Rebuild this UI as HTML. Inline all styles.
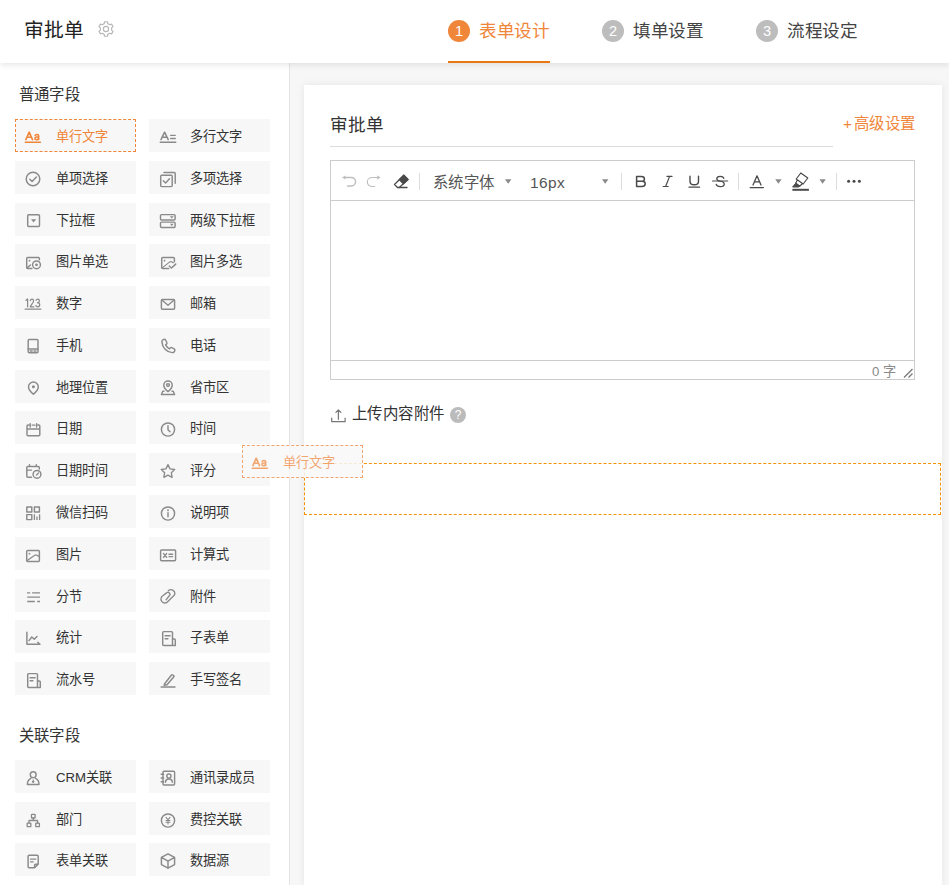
<!DOCTYPE html>
<html lang="zh-CN">
<head>
<meta charset="utf-8">
<title>审批单</title>
<style>
*{box-sizing:border-box;margin:0;padding:0}
html,body{width:949px;height:885px;overflow:hidden}
body{font-family:"Liberation Sans",sans-serif;background:#f7f7f7;color:#333;position:relative;font-size:13px}
svg{display:block}
/* header */
.hd{position:absolute;left:0;top:0;width:949px;height:63px;background:#fff;box-shadow:0 2px 6px rgba(0,0,0,.10);z-index:10}
.hd .tt{position:absolute;left:24px;top:16px;font-size:19.8px;letter-spacing:-.2px;line-height:29px;color:#222}
.hd .gear{position:absolute;left:97.500px;top:21px;width:16px;height:16px}
.tab{position:absolute;top:0;height:62px}
.tab .num{position:absolute;left:0;top:20px;width:22px;height:22px;border-radius:50%;background:#bdbdbd;color:#fff;font-size:14.600px;line-height:23px;text-align:center}
.tab .lb{position:absolute;left:31px;top:17px;font-size:17.6px;letter-spacing:-.4px;line-height:29px;color:#444;white-space:nowrap}
.tab.on .num{background:#f0863a}
.tab.on .lb{color:#f0863a}
.tab.on:after{content:"";position:absolute;left:0;top:61px;width:102px;height:2px;background:#e8780f}
/* sidebar */
.sb{position:absolute;left:0;top:62px;width:290px;height:823px;background:#fff;border-right:1px solid #e4e4e4}
.sec{position:absolute;left:18.500px;font-size:15.4px;letter-spacing:.4px;line-height:22px;color:#333}
.it{position:absolute;width:121px;height:33px;background:#f7f7f7;font-size:13.2px;line-height:33px;color:#333;white-space:nowrap}
.it span{position:absolute;left:41px;top:1px}
.it svg{position:absolute;left:9px;top:8.500px;width:18px;height:18px;color:#8a8a8a}
.it.on{background:#f7f7f7;border:1px dashed #f0863a;color:#f0863a}
.it.on span{left:40px;top:0}
.it.on svg{left:8px;top:7.500px;color:#f0863a}
.c1{left:15px}.c2{left:149px}
.it.c2 svg{left:10px}
/* main */
.card{position:absolute;left:304px;top:85px;width:638px;height:800px;background:#fff;box-shadow:0 0 8px rgba(0,0,0,.08)}
.ft{position:absolute;left:330px;top:112px;font-size:17.6px;line-height:27px;color:#333}
.fl{position:absolute;left:330px;top:146px;width:503px;height:1px;background:#dcdcdc}
.adv{position:absolute;left:843px;top:113px;font-size:15.4px;letter-spacing:.4px;line-height:22px;color:#f0863a;white-space:nowrap}
.ed{position:absolute;left:330px;top:160px;width:585px;height:220px;border:1px solid #ccc;background:#fff}
.ed .tb{position:absolute;left:0;top:0;width:583px;height:40px;border-bottom:1px solid #ccc}
.ed .st{position:absolute;left:0;top:199px;width:583px;height:19px;border-top:1px solid #ccc}
.tx{position:absolute;font-size:15.400px;letter-spacing:.4px;line-height:22px;color:#555;white-space:nowrap}
.cnt{position:absolute;left:860px;top:363px;width:36px;text-align:right;font-size:13.200px;line-height:17px;color:#8a8a8a;white-space:nowrap}
.up{position:absolute;left:352px;top:403px;font-size:15.400px;letter-spacing:.4px;line-height:22px;color:#333;white-space:nowrap}
.q{position:absolute;left:450px;top:407px;width:16px;height:16px;border-radius:50%;background:#bbb;color:#fff;font-size:12px;line-height:16px;text-align:center}
.dz{position:absolute;left:304px;top:463px;width:637px;height:52px;border:1px dashed #f29200}
.gh{position:absolute;left:242px;top:445px;width:121px;height:33px;background:rgba(248,248,248,.86);border:1px dashed rgba(240,134,58,.72);color:rgba(240,134,58,.72);font-size:13.2px;line-height:31px;z-index:20;white-space:nowrap}
.gh span{position:absolute;left:40px;top:1px}
.gh svg{position:absolute;left:8px;top:7.500px;width:18px;height:18px}
</style>
</head>
<body>
<svg width="0" height="0" style="position:absolute" aria-hidden="true">
<defs>
<g id="i1" fill="none" stroke="currentColor" stroke-width="1.45" stroke-linecap="round" stroke-linejoin="round"><path d="M1.900 11.600 L5.200 4.200 L8.500 11.600 M3.100 9.200 H7.300" stroke-width="1.600"/><path d="M11.100 7.400 Q11.800 6.600 12.900 6.600 Q14.700 6.600 14.700 8.300 V11.600 M14.700 9 H12.900 Q10.900 9 10.900 10.400 Q10.900 11.700 12.400 11.700 Q14 11.700 14.700 10.500" stroke-width="1.500"/><path d="M1.200 14.200 H16.400" stroke-width="1.400"/></g>
<g id="i2" fill="none" stroke="currentColor" stroke-width="1.45" stroke-linecap="round" stroke-linejoin="round"><path d="M2 11.600 L5.600 4.200 L9.200 11.600 M3.300 9.200 H7.900" stroke-width="1.500"/><path d="M11.600 7.300 H16.300 M11.600 10.500 H16.300" stroke-width="1.300"/><path d="M1.200 14.200 H16.800" stroke-width="1.400"/></g>
<g id="i3" fill="none" stroke="currentColor" stroke-width="1.45" stroke-linecap="round" stroke-linejoin="round"><circle cx="9" cy="9" r="6.800"/><path d="M5.800 9.300 L8.100 11.500 L12.400 7"/></g>
<g id="i4" fill="none" stroke="currentColor" stroke-width="1.45" stroke-linecap="round" stroke-linejoin="round"><rect x="1.700" y="5.300" width="11.500" height="11.300" rx="1"/><path d="M4.300 10.800 L6.600 13 L10.500 8.700"/><path d="M5 2.400 H15.200 Q16.200 2.400 16.200 3.400 V13.300"/></g>
<g id="i5" fill="none" stroke="currentColor" stroke-width="1.45" stroke-linecap="round" stroke-linejoin="round"><rect x="3.700" y="2.700" width="11.800" height="11.800" rx="1"/><path d="M7 7.200 H12.200 L9.600 10.400 Z" fill="currentColor" stroke="none"/></g>
<g id="i6" fill="none" stroke="currentColor" stroke-width="1.45" stroke-linecap="round" stroke-linejoin="round"><rect x="1.500" y="2.600" width="14.600" height="5.300" rx="1"/><rect x="1.500" y="10.100" width="14.600" height="5.300" rx="1"/><path d="M10.900 4.200 h3.800 l-1.900 2.200z M10.900 11.700 h3.800 l-1.900 2.200z" fill="currentColor" stroke="none"/></g>
<g id="i7" fill="none" stroke="currentColor" stroke-width="1.45" stroke-linecap="round" stroke-linejoin="round"><path d="M7.900 15.400 H3.700 Q2.700 15.400 2.700 14.400 V5.400 Q2.700 4.400 3.700 4.400 H14.400 Q15.400 4.400 15.400 5.400 V6.700"/><path d="M3.200 14.900 L6.500 12"/><circle cx="5.500" cy="7.700" r=".9" fill="currentColor" stroke="none"/><circle cx="12.500" cy="11.800" r="3.900"/><circle cx="12.500" cy="11.800" r="1.400" fill="currentColor" stroke="none"/></g>
<g id="i8" fill="none" stroke="currentColor" stroke-width="1.45" stroke-linecap="round" stroke-linejoin="round"><path d="M9.800 15.400 H3.700 Q2.700 15.400 2.700 14.400 V5.400 Q2.700 4.400 3.700 4.400 H14.400 Q15.400 4.400 15.400 5.400 V8.800"/><path d="M3.200 14.900 L10.800 8.900 Q11.600 8.300 12.500 8.800 L14.300 9.800" stroke-width="1.200"/><circle cx="5.500" cy="7.700" r=".9" fill="currentColor" stroke="none"/><path d="M10.300 13 L12.500 15 L16.700 11.100"/></g>
<g id="i9" fill="none" stroke="currentColor" stroke-width="1.45" stroke-linecap="round" stroke-linejoin="round"><path d="M2 5.300 L3.600 4 V11.800 M6.300 5.600 Q6.500 4 8 4 Q9.600 4 9.600 5.700 Q9.600 7 8.200 8.600 L6.200 11.800 H9.900 M12 5.200 Q12.500 4 13.800 4 Q15.400 4 15.400 5.800 Q15.400 7.600 13.500 7.700 Q15.700 7.800 15.700 9.700 Q15.700 11.800 13.800 11.800 Q12.300 11.800 11.800 10.600" stroke-width="1.250"/><path d="M1.200 14.200 H16.800" stroke-width="1.300"/></g>
<g id="i10" fill="none" stroke="currentColor" stroke-width="1.45" stroke-linecap="round" stroke-linejoin="round"><rect x="2.400" y="4.400" width="13.200" height="9.800" rx="1"/><path d="M2.900 5 L9 10.300 L15.100 5"/></g>
<g id="i11" fill="none" stroke="currentColor" stroke-width="1.45" stroke-linecap="round" stroke-linejoin="round"><rect x="4.200" y="2.500" width="9.800" height="13.200" rx="1"/><path d="M4.200 12 H14 M6.200 14 H8.200 M10 14 H12"/></g>
<g id="i12" fill="none" stroke="currentColor" stroke-width="1.45" stroke-linecap="round" stroke-linejoin="round"><path d="M5.600 2.300 C4.300 2.300 2.800 3.300 2.900 4.900 C3.300 10.600 7.600 15.300 13.200 15.600 C14.700 15.700 15.900 14.400 15.900 13.100 C15.900 12.600 15.700 12.200 15.200 11.900 L12.900 10.600 C12.400 10.300 11.800 10.400 11.400 10.800 L10.500 11.800 C8.800 10.900 7.500 9.600 6.600 7.900 L7.600 7 C8 6.600 8.100 6 7.800 5.500 L6.600 3 C6.400 2.500 6 2.300 5.600 2.300 Z"/></g>
<g id="i13" fill="none" stroke="currentColor" stroke-width="1.45" stroke-linecap="round" stroke-linejoin="round"><path d="M9.400 15.200 C9.400 15.200 4.500 11 4.500 7.900 A4.900 4.900 0 0 1 14.300 7.900 C14.300 11 9.400 15.200 9.400 15.200 Z"/><circle cx="9.400" cy="7.800" r="1.500" fill="currentColor" stroke="none"/></g>
<g id="i14" fill="none" stroke="currentColor" stroke-width="1.45" stroke-linecap="round" stroke-linejoin="round"><path d="M9 12.600 C9 12.600 4.800 9.200 4.800 6.200 A4.200 4.200 0 0 1 13.200 6.200 C13.200 9.200 9 12.600 9 12.600 Z"/><circle cx="9" cy="6.100" r="1.400"/><path d="M5 12.300 H3.800 L2.400 15.500 H15.600 L14.200 12.300 H13"/></g>
<g id="i15" fill="none" stroke="currentColor" stroke-width="1.45" stroke-linecap="round" stroke-linejoin="round"><path d="M4.800 5 H4 Q3 5 3 6 V14.700 Q3 15.700 4 15.700 H14.800 Q15.800 15.700 15.800 14.700 V6 Q15.800 5 14.800 5 H14 M8.200 5.100 H10.800 M3 8.900 H15.800 M6.200 3.800 V7 M12.600 3.800 V7"/></g>
<g id="i16" fill="none" stroke="currentColor" stroke-width="1.45" stroke-linecap="round" stroke-linejoin="round"><circle cx="9" cy="9.500" r="6.600"/><path d="M9 5.700 V9.800 L11 11.800"/></g>
<g id="i17" fill="none" stroke="currentColor" stroke-width="1.45" stroke-linecap="round" stroke-linejoin="round"><path d="M7.500 15.300 H3.800 Q2.800 15.300 2.800 14.300 V5.500 Q2.800 4.500 3.800 4.500 H14.300 Q15.300 4.500 15.300 5.500 V7 M2.800 8.100 H7.500 M5.500 2.700 V4.500 M12.300 2.700 V4.500"/><circle cx="13" cy="12.300" r="3.900"/><path d="M12.500 13 L14.500 11" stroke-width="1.300"/></g>
<g id="i18" fill="none" stroke="currentColor" stroke-width="1.45" stroke-linecap="round" stroke-linejoin="round"><path transform="translate(.6 .8) scale(.93)" d="M9 2 L11.200 6.500 L16.200 7.200 L12.600 10.700 L13.450 15.600 L9 13.300 L4.550 15.600 L5.400 10.700 L1.800 7.200 L6.800 6.500 Z"/></g>
<g id="i19" fill="none" stroke="currentColor" stroke-width="1.45" stroke-linecap="round" stroke-linejoin="round"><rect x="2.800" y="3" width="5" height="5"/><rect x="10.400" y="3" width="5" height="5"/><rect x="2.800" y="10.600" width="5" height="5"/><path d="M10.400 10.200 V16 M13 12.600 V16 M15.600 10.200 V16" stroke-linecap="butt" stroke-width="1.300"/></g>
<g id="i20" fill="none" stroke="currentColor" stroke-width="1.45" stroke-linecap="round" stroke-linejoin="round"><circle cx="9" cy="9.500" r="6.600"/><path d="M9 8.700 V12.800"/><circle cx="9" cy="6.300" r=".95" fill="currentColor" stroke="none"/></g>
<g id="i21" fill="none" stroke="currentColor" stroke-width="1.45" stroke-linecap="round" stroke-linejoin="round"><rect x="2.700" y="4.400" width="12.700" height="11" rx="1"/><path d="M3.200 14.600 L10.800 9.200 Q11.600 8.600 12.500 9.100 L15.200 10.500" stroke-width="1.200"/><circle cx="5.500" cy="7.700" r=".9" fill="currentColor" stroke="none"/></g>
<g id="i22" fill="none" stroke="currentColor" stroke-width="1.45" stroke-linecap="round" stroke-linejoin="round"><rect x="1.600" y="4" width="15" height="10.800" rx="1"/><path d="M4.600 7.600 L7.600 11.200 M7.600 7.600 L4.600 11.200 M10 8.300 H13.600 M10 10.600 H13.600"/></g>
<g id="i23" fill="none" stroke="currentColor" stroke-width="1.45" stroke-linecap="round" stroke-linejoin="round"><path d="M3 4.900 H6.200 M8.100 4.900 H16 M3.200 9.100 H16 M3.200 13.500 H10.800 M13.200 13.500 H16" stroke-linecap="butt" stroke-width="1.400"/></g>
<g id="i24" fill="none" stroke="currentColor" stroke-width="1.45" stroke-linecap="round" stroke-linejoin="round"><path d="M9.250 2.850 A3.800 3.800 0 0 1 15.400 7.100 L8.900 13.500 A3.900 3.900 0 1 1 3.800 7.750 L7.560 4.870 A1.900 1.900 0 0 1 10.300 7.750 L7.050 11.800" stroke-width="1.350"/></g>
<g id="i25" fill="none" stroke="currentColor" stroke-width="1.45" stroke-linecap="round" stroke-linejoin="round"><path d="M2.900 3.300 V15.200 H16 M5 11.600 L7.800 8 L10.300 10.200 L13 7.500 M13.800 13.200 L15.600 15"/></g>
<g id="i26" fill="none" stroke="currentColor" stroke-width="1.45" stroke-linecap="round" stroke-linejoin="round"><g transform="translate(.9 .4)"><rect x="2.800" y="2.200" width="9.800" height="13.800" rx="1"/><path d="M5.200 6.300 H10.200 M5.200 9.300 H8 M12.600 9.600 H14.400 Q15.400 9.600 15.400 10.600 V16 H12.600"/></g></g>
<g id="i27" fill="none" stroke="currentColor" stroke-width="1.45" stroke-linecap="round" stroke-linejoin="round"><g transform="translate(.9 .4)"><rect x="2.800" y="2.200" width="9.800" height="13.800" rx="1"/><path d="M5.200 6.300 H10.200 M5.200 9.300 H8 M12.600 9.600 H14.400 Q15.400 9.600 15.400 10.600 V16 H12.600"/></g></g>
<g id="i28" fill="none" stroke="currentColor" stroke-width="1.45" stroke-linecap="round" stroke-linejoin="round"><path d="M2.200 16 H16 M5.600 12.800 L12.300 4.200 Q13 3.400 13.800 4 L14.600 4.600 Q15.400 5.300 14.700 6.100 L8 13.800 L5.200 14.200 Z"/></g>
<g id="i29" fill="none" stroke="currentColor" stroke-width="1.45" stroke-linecap="round" stroke-linejoin="round"><circle cx="9.200" cy="5.700" r="2.900"/><path d="M6.800 9.400 C4.600 10.500 3.400 12.600 3.400 15.400 H15 C15 12.600 13.800 10.500 11.600 9.400"/><path d="M9.200 10.800 V13.200 M8.400 12.500 L9.200 13.600 L10 12.500" stroke-width="1.100"/></g>
<g id="i30" fill="none" stroke="currentColor" stroke-width="1.45" stroke-linecap="round" stroke-linejoin="round"><rect x="4" y="2.200" width="11.600" height="13.800" rx="1"/><path d="M2.200 5.200 H4.600 M2.200 9 H4.600 M2.200 12.800 H4.600"/><circle cx="9.900" cy="7" r="2.100"/><path d="M6.500 13.200 C6.500 11 8 9.900 9.900 9.900 C11.800 9.900 13.300 11 13.300 13.200"/></g>
<g id="i31" fill="none" stroke="currentColor" stroke-width="1.45" stroke-linecap="round" stroke-linejoin="round"><g transform="translate(1.1 1.3) scale(.91)"><rect x="7" y="2.300" width="4" height="4" rx=".6"/><rect x="2.300" y="11.800" width="4" height="4" rx=".6"/><rect x="11.700" y="11.800" width="4" height="4" rx=".6"/><path d="M9 6.300 V9 M4.300 11.800 V9 H13.700 V11.800"/></g></g>
<g id="i32" fill="none" stroke="currentColor" stroke-width="1.45" stroke-linecap="round" stroke-linejoin="round"><circle cx="9" cy="9.500" r="6.600"/><path d="M7 6.400 L9 8.900 L11 6.400 M9 8.900 V13 M7 9.400 H11 M7 11.200 H11" stroke-width="1.050"/></g>
<g id="i33" fill="none" stroke="currentColor" stroke-width="1.45" stroke-linecap="round" stroke-linejoin="round"><path d="M10.600 15.700 H5.100 Q4.100 15.700 4.100 14.700 V4.300 Q4.100 3.300 5.100 3.300 H13.200 Q14.200 3.300 14.200 4.300 V12.200 Z M14.200 12.200 H11.600 Q10.600 12.200 10.600 13.200 V15.700"/><path d="M6.500 7 H11.800 M6.500 9.800 H9.200" stroke-width="1.250"/></g>
<g id="i34" fill="none" stroke="currentColor" stroke-width="1.45" stroke-linecap="round" stroke-linejoin="round"><path d="M9 1.800 L15.600 5.400 V12.600 L9 16.200 L2.400 12.600 V5.400 Z M2.400 5.400 L9 9.100 L15.600 5.400 M9 9.100 V16.200"/></g>
</defs>
</svg>
<div class="hd">
  <div class="tt">审批单</div>
  <svg class="gear" viewBox="0 0 16 16"><path d="M9.86 2.61 L9.41 0.74 L6.59 0.74 L6.14 2.61 L4.26 3.70 L2.42 3.15 L1.00 5.59 L2.40 6.91 L2.40 9.09 L1.00 10.41 L2.42 12.85 L4.26 12.30 L6.14 13.39 L6.59 15.26 L9.41 15.26 L9.86 13.39 L11.74 12.30 L13.58 12.85 L15.00 10.41 L13.60 9.09 L13.60 6.91 L15.00 5.59 L13.58 3.15 L11.74 3.70 Z" fill="none" stroke="#b8b8b8" stroke-width="1.200" stroke-linejoin="round"/><circle cx="8" cy="8" r="2.600" fill="none" stroke="#b8b8b8" stroke-width="1.200"/></svg>
  <div class="tab on" style="left:448px;width:102px"><div class="num">1</div><div class="lb">表单设计</div></div>
  <div class="tab" style="left:602px;width:102px"><div class="num">2</div><div class="lb">填单设置</div></div>
  <div class="tab" style="left:756px;width:102px"><div class="num">3</div><div class="lb">流程设定</div></div>
</div>
<div class="sb">
  <div class="sec" style="top:22px">普通字段</div>
  <div class="sec" style="top:663px">关联字段</div>
  <div class="it c1 on" style="top:57px"><svg viewBox="0 0 18 18"><use href="#i1"/></svg><span>单行文字</span></div>
  <div class="it c2" style="top:57px"><svg viewBox="0 0 18 18"><use href="#i2"/></svg><span>多行文字</span></div>
  <div class="it c1" style="top:99px"><svg viewBox="0 0 18 18"><use href="#i3"/></svg><span>单项选择</span></div>
  <div class="it c2" style="top:99px"><svg viewBox="0 0 18 18"><use href="#i4"/></svg><span>多项选择</span></div>
  <div class="it c1" style="top:141px"><svg viewBox="0 0 18 18"><use href="#i5"/></svg><span>下拉框</span></div>
  <div class="it c2" style="top:141px"><svg viewBox="0 0 18 18"><use href="#i6"/></svg><span>两级下拉框</span></div>
  <div class="it c1" style="top:182px"><svg viewBox="0 0 18 18"><use href="#i7"/></svg><span>图片单选</span></div>
  <div class="it c2" style="top:182px"><svg viewBox="0 0 18 18"><use href="#i8"/></svg><span>图片多选</span></div>
  <div class="it c1" style="top:224px"><svg viewBox="0 0 18 18"><use href="#i9"/></svg><span>数字</span></div>
  <div class="it c2" style="top:224px"><svg viewBox="0 0 18 18"><use href="#i10"/></svg><span>邮箱</span></div>
  <div class="it c1" style="top:266px"><svg viewBox="0 0 18 18"><use href="#i11"/></svg><span>手机</span></div>
  <div class="it c2" style="top:266px"><svg viewBox="0 0 18 18"><use href="#i12"/></svg><span>电话</span></div>
  <div class="it c1" style="top:308px"><svg viewBox="0 0 18 18"><use href="#i13"/></svg><span>地理位置</span></div>
  <div class="it c2" style="top:308px"><svg viewBox="0 0 18 18"><use href="#i14"/></svg><span>省市区</span></div>
  <div class="it c1" style="top:349px"><svg viewBox="0 0 18 18"><use href="#i15"/></svg><span>日期</span></div>
  <div class="it c2" style="top:349px"><svg viewBox="0 0 18 18"><use href="#i16"/></svg><span>时间</span></div>
  <div class="it c1" style="top:391px"><svg viewBox="0 0 18 18"><use href="#i17"/></svg><span>日期时间</span></div>
  <div class="it c2" style="top:391px"><svg viewBox="0 0 18 18"><use href="#i18"/></svg><span>评分</span></div>
  <div class="it c1" style="top:433px"><svg viewBox="0 0 18 18"><use href="#i19"/></svg><span>微信扫码</span></div>
  <div class="it c2" style="top:433px"><svg viewBox="0 0 18 18"><use href="#i20"/></svg><span>说明项</span></div>
  <div class="it c1" style="top:475px"><svg viewBox="0 0 18 18"><use href="#i21"/></svg><span>图片</span></div>
  <div class="it c2" style="top:475px"><svg viewBox="0 0 18 18"><use href="#i22"/></svg><span>计算式</span></div>
  <div class="it c1" style="top:517px"><svg viewBox="0 0 18 18"><use href="#i23"/></svg><span>分节</span></div>
  <div class="it c2" style="top:517px"><svg viewBox="0 0 18 18"><use href="#i24"/></svg><span>附件</span></div>
  <div class="it c1" style="top:558px"><svg viewBox="0 0 18 18"><use href="#i25"/></svg><span>统计</span></div>
  <div class="it c2" style="top:558px"><svg viewBox="0 0 18 18"><use href="#i26"/></svg><span>子表单</span></div>
  <div class="it c1" style="top:600px"><svg viewBox="0 0 18 18"><use href="#i27"/></svg><span>流水号</span></div>
  <div class="it c2" style="top:600px"><svg viewBox="0 0 18 18"><use href="#i28"/></svg><span>手写签名</span></div>
  <div class="it c1" style="top:698px"><svg viewBox="0 0 18 18"><use href="#i29"/></svg><span>CRM关联</span></div>
  <div class="it c2" style="top:698px"><svg viewBox="0 0 18 18"><use href="#i30"/></svg><span>通讯录成员</span></div>
  <div class="it c1" style="top:740px"><svg viewBox="0 0 18 18"><use href="#i31"/></svg><span>部门</span></div>
  <div class="it c2" style="top:740px"><svg viewBox="0 0 18 18"><use href="#i32"/></svg><span>费控关联</span></div>
  <div class="it c1" style="top:781px"><svg viewBox="0 0 18 18"><use href="#i33"/></svg><span>表单关联</span></div>
  <div class="it c2" style="top:781px"><svg viewBox="0 0 18 18"><use href="#i34"/></svg><span>数据源</span></div>

</div>
<div class="card"></div>
<div class="ft">审批单</div>
<div class="fl"></div>
<div class="adv">+<span style="margin-left:1.500px">高级设置</span></div>
<div class="ed"><div class="tb"></div><div class="st"></div></div>
<svg class="tbi" style="position:absolute;left:331px;top:161px;width:583px;height:39px" viewBox="331 161 583 39">
<g fill="none" stroke="#bdbdbd" stroke-width="1.400" stroke-linecap="round">
<path d="M345 177.500 H351.300 A4.250 4.250 0 0 1 351.300 186 H347.500"/>
<path d="M342 177.500 L345.400 175.500 V179.500 Z" fill="#bdbdbd" stroke="none"/>
<path d="M377.500 177.500 H371.800 A4.500 4.500 0 0 0 371.800 186.500 H374.500" stroke-width="1.100"/>
<path d="M380.600 177.500 L377.200 175.500 V179.500 Z" fill="#bdbdbd" stroke="none"/>
</g>
<g fill="none" stroke="#4a4a4a" stroke-width="1.300" stroke-linejoin="round" stroke-linecap="round">
<path d="M403.800 175.300 L408 179.500 L399.300 187.500 H397.500 L394.500 184.500 Z"/>
<path d="M403.800 175.300 L408 179.500 L403.400 183.800 L399.200 179.600 Z" fill="#4a4a4a"/>
<path d="M399 187.500 H407"/>
</g>
<g stroke="#dcdcdc" stroke-width="1"><path d="M419.500 173 V190 M621.500 173 V190 M738.500 173 V190 M836.500 173 V190"/></g>
<g fill="#8a8a8a"><path d="M505 179.300 H511.400 L508.200 183.800 Z M602 179.300 H608.400 L605.200 183.800 Z M775.200 179.300 H781.600 L778.400 183.800 Z M819.400 179.300 H825.800 L822.600 183.800 Z"/></g>
<g fill="none" stroke="#4a4a4a" stroke-width="1.500" stroke-linejoin="round" stroke-linecap="round">
<path d="M636.600 176.600 V186.500 H641.800 Q645.200 186.500 645.200 183.700 Q645.200 181.300 642.200 181.300 H636.600 M642.200 181.300 Q644.400 181.300 644.400 178.900 Q644.400 176.600 641.500 176.600 H636.600"/>
<path d="M667 176.400 H672 M663.200 186.500 H668.200 M669.600 176.400 L665.600 186.500" stroke-width="1.200"/>
<path d="M690 176.200 V181.200 Q690 184.800 694.250 184.800 Q698.500 184.800 698.500 181.200 V176.200" stroke-width="1.400"/>
<path d="M689 187.200 H699.600" stroke-width="1.200"/>
<path d="M723.800 178.300 Q723.200 176.300 720.200 176.300 Q716.800 176.300 716.800 178.700 Q716.800 180.600 720.200 181.200 Q724.200 181.800 724.200 184.200 Q724.200 186.600 720.400 186.600 Q716.800 186.600 716.200 184.400" stroke-width="1.300"/>
<path d="M712.500 181 H727.700" stroke-width="1.100"/>
<path d="M753 185 L757 175.800 L761 185 M754.500 181.800 H759.500" stroke-width="1.300"/>
<path d="M750.200 187.600 H763.400" stroke-width="1.300"/>
<path d="M800.800 173 L807.800 178 L803.200 184 L796.200 179 Z M797.200 180.200 L795.600 183.400 L799.600 186.200 L802 184" stroke-width="1.200"/>
<path d="M795.600 183.400 L792.600 187 H798.400 L799.600 186.200 Z" fill="#4a4a4a" stroke-width="1"/>
<path d="M792.400 189.800 H808.900" stroke-width="2" stroke-linecap="butt"/>
</g>
<g fill="#4a4a4a"><circle cx="848.600" cy="181.200" r="1.500"/><circle cx="854" cy="181.200" r="1.500"/><circle cx="859.400" cy="181.200" r="1.500"/></g>
</svg>
<div class="tx" style="left:433px;top:172px">系统字体</div>
<div class="tx" style="left:530px;top:172px">16px</div>
<div class="cnt">0 字</div>
<svg style="position:absolute;left:903px;top:368px;width:10px;height:10px" viewBox="0 0 10 10"><path d="M1 9.500 L9.500 1 M5.500 9.500 L9.500 5.500" stroke="#7a7a7a" stroke-width="1.300" fill="none"/></svg>
<svg style="position:absolute;left:330px;top:407px;width:17px;height:17px" viewBox="0 0 17 17"><path d="M8.400 12.300 V3 M5.900 5.400 L8.400 2.900 L10.900 5.400 M1.700 11 V14.700 H15.100 V11" fill="none" stroke="#777" stroke-width="1.200" stroke-linecap="round" stroke-linejoin="round"/></svg>
<div class="up">上传内容附件</div>
<div class="q">?</div>
<div class="dz"></div>
<div class="gh"><svg viewBox="0 0 18 18"><use href="#i1"/></svg><span>单行文字</span></div>
</body>
</html>
